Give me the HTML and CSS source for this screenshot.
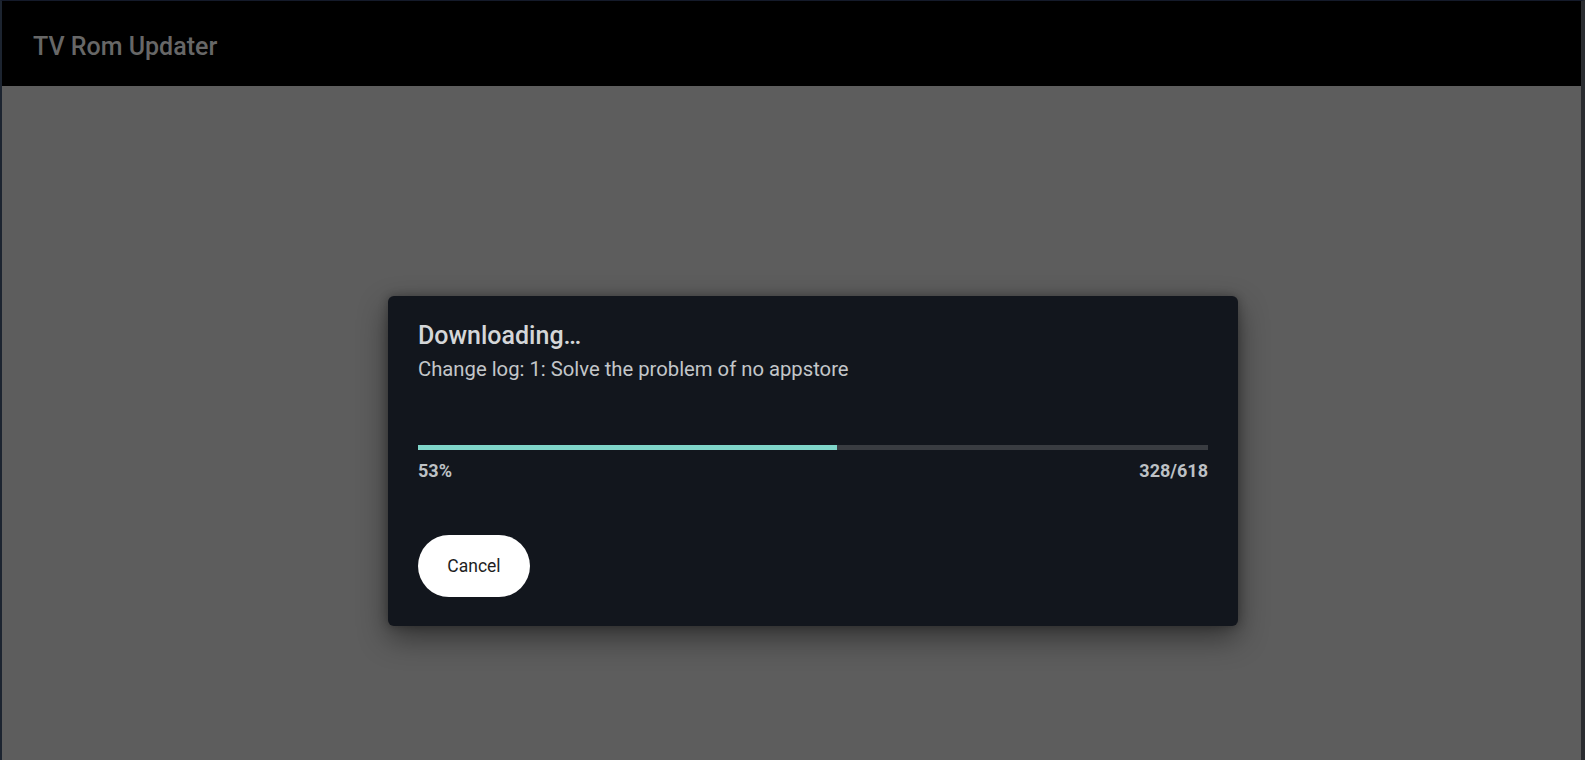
FILE: index.html
```html
<!DOCTYPE html>
<html>
<head>
<meta charset="utf-8">
<link rel="stylesheet" href="styles.css">
</head>
<body>
<div class="screen">
  <header class="appbar">
    <div class="apptitle">TV Rom Updater</div>
  </header>
  <main class="content">
    <section class="dialog">
      <h1 class="dlg-title">Downloading…</h1>
      <p class="dlg-msg">Change log: 1: Solve the problem of no appstore</p>
      <div class="progress">
        <div class="progress-fill" style="width:53%"></div>
      </div>
      <div class="progress-labels">
        <span>53%</span>
        <span>328/618</span>
      </div>
      <div class="actions">
        <button class="btn">Cancel</button>
      </div>
    </section>
  </main>
</div>
</body>
</html>
```
FILE: styles.css
```css
html, body {
  margin: 0;
  padding: 0;
  height: 100%;
  background: #000;
}
body {
  font-family: Roboto, "Liberation Sans", sans-serif;
  overflow: hidden;
}
.screen {
  height: 760px;
  display: flex;
  flex-direction: column;
  border-top: 1px solid #141a2a;
  border-left: 2px solid #1c2430;
  border-right: 4px solid #2a2c30;
  box-sizing: border-box;
}
.appbar {
  height: 85px;
  background: #000;
  display: flex;
  align-items: center;
  padding-left: 31px;
  box-sizing: border-box;
  flex-shrink: 0;
}
.apptitle {
  color: #676767;
  font-size: 25px;
  font-weight: 500;
  margin-top: 6px;
}
.content {
  flex: 1;
  background: #5d5d5d;
  padding: 210px 0 0 386px;
}
.dialog {
  width: 850px;
  height: 330px;
  box-sizing: border-box;
  background: #12161d;
  border-radius: 6px;
  box-shadow: 0 12px 30px rgba(0,0,0,0.45), 0 0 10px rgba(0,0,0,0.3);
  padding: 26px 30px 0 30px;
  display: flex;
  flex-direction: column;
}
.dlg-title {
  margin: 0;
  font-size: 25px;
  font-weight: 500;
  color: #d4d6d8;
  line-height: 28px;
}
.dlg-msg {
  margin: 7px 0 0 0;
  font-size: 20.25px;
  color: #c3c6c9;
  line-height: 24px;
}
.progress {
  margin-top: 64px;
  width: 790px;
  height: 5px;
  background: #393c41;
}
.progress-fill {
  height: 100%;
  background: #7fd5c9;
}
.progress-labels {
  width: 790px;
  display: flex;
  justify-content: space-between;
  margin-top: 10px;
  font-size: 18px;
  font-weight: 700;
  color: #bdc1c5;
  line-height: 22px;
}
.actions {
  margin-top: 53px;
}
.btn {
  width: 112px;
  height: 62px;
  border: none;
  border-radius: 31px;
  background: #fff;
  color: #1e1e1e;
  font-family: Roboto, "Liberation Sans", sans-serif;
  font-size: 17.5px;
  padding: 0;
}
```
